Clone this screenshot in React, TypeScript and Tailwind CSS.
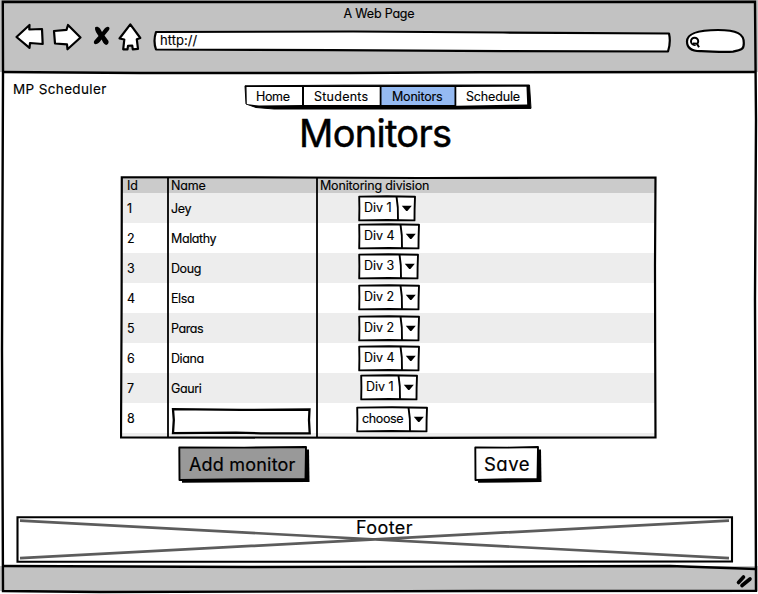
import React from "react";

const rows = [
  { id: "1", name: "Jey", div: "Div 1", w: 58, box: "ml-[40px] mt-[2px] w-[58px]" },
  { id: "2", name: "Malathy", div: "Div 4", w: 62, box: "ml-[40px] mt-0 w-[62px]" },
  { id: "3", name: "Doug", div: "Div 3", w: 61, box: "ml-[40px] mt-0 w-[61px]" },
  { id: "4", name: "Elsa", div: "Div 2", w: 62, box: "ml-[40px] mt-[1px] w-[62px]" },
  { id: "5", name: "Paras", div: "Div 2", w: 62, box: "ml-[40px] mt-[2px] w-[62px]" },
  { id: "6", name: "Diana", div: "Div 4", w: 62, box: "ml-[40px] mt-[2px] w-[62px]" },
  { id: "7", name: "Gauri", div: "Div 1", w: 58, box: "ml-[42px] mt-[1px] w-[58px]" },
  { id: "8", name: "", div: "choose", w: 72, box: "ml-[38px] mt-[3px] w-[72px]" },
];

function Select({ label, w, box }: { label: string; w: number; box: string }) {
  return (
    <div className={`relative h-[27px] ${box}`}>
      <svg className="absolute inset-0" width={w} height="27" fill="none" stroke="#000" strokeWidth="1.9" strokeLinejoin="round">
        <path d={`M1.2 1.6 L${w / 2} 1.3 L${w - 1} 1.7 L${w - 1.4} 14 L${w - 1.5} 25.4 L${w / 2} 25 L1.2 25.4 L1.4 13 Z`} fill="#fff" />
        <path d={`M${w - 19.5} 1.5 Q${w - 17.6} 12 ${w - 18} 25`} />
        <path d={`M${w - 14.2} 10.8 h10 l-4.4 5.2 h-1.2 Z`} fill="#000" stroke="none" />
      </svg>
      <span className={`relative block pl-[6px] pt-[4px] leading-[18px] ${label === "choose" ? "tracking-[-0.35px]" : "tracking-[-0.05px]"}`}>{label}</span>
    </div>
  );
}

function BrowserBar() {
  return (
    <header className="h-[72px] shrink-0 bg-[#c2c2c2]">
      <div className="h-[26px] pt-[5px] text-center text-[12.5px] leading-[17px] tracking-[-0.2px]">A Web Page</div>
      <div className="flex h-[32px] items-start">
        <svg className="ml-[14px] mt-[-5px]" width="130" height="32" viewBox="14 21 130 32" fill="#fff" stroke="#000" strokeWidth="2.2" strokeLinejoin="round">
          <path d="M16.5 37 L29.5 25 L29.3 29.5 L42 29 L42.7 44 L30 43 L29.5 47.8 Z" />
          <path d="M54 31 L66.5 29.8 L68 25 L80.5 37.5 L67.5 49.3 L67 44.3 L55 43.5 Z" />
          <path d="M95 27.5 C96 26 98.5 26.5 100 28.5 L102 32 C103.5 30 105 27.5 107.5 26.8 C109.5 26.8 110 28.5 109 30 L104.5 35.5 L108.5 41 C109 43.5 107.5 45.3 105.5 44.8 C103.5 44 102.5 41 101.5 39.5 C100 42 98 44 95.5 44.2 C93.5 44 93.5 41.8 94.5 40.5 L98.5 36 C97 33.5 94.5 30.5 95 27.5 Z" fill="#000" stroke="none" />
          <path d="M130.3 24.4 L140.3 38 L136.8 39.3 L138 48.8 L132.8 49.3 L132.2 45.5 L128 45.8 L127.5 49.3 L123.2 49.3 L124.3 39.5 L119.5 38.5 Z" />
        </svg>
        <div className="relative ml-[9px] mt-[4px] h-[23px] w-[518px]">
          <svg className="absolute inset-0" width="518" height="23" fill="#fff" stroke="#000" strokeWidth="2.2" strokeLinejoin="round">
            <path d="M3 2 L200 1.5 L350 2.5 L516 3.5 Q518 12 515 21.5 L350 21.2 L180 20.2 L3 19.5 Q0 11 3 2 Z" />
          </svg>
          <span className="relative block pl-[7px] pt-[2px] text-[13px] leading-[17px] tracking-[0.05px]">http://</span>
        </div>
        <svg className="ml-[14px] mt-[1px]" width="62" height="28" viewBox="685 27 62 28" fill="#fff" stroke="#000" strokeWidth="2.2">
          <path d="M687 41.5 C687 34 697 30 718 30 C737 30 744 34 743.8 43 C744 49 742 50 733 51.6 C722 52.7 710 51 700 51.2 C691 51 687 47 687 41.5 Z" />
          <circle cx="694.6" cy="41.3" r="3.6" strokeWidth="2" />
          <path d="M693 43.5 L697 43.8 L699 47.2" strokeWidth="2" />
        </svg>
      </div>
    </header>
  );
}

function Nav() {
  return (
    <nav className="relative mt-[12px] h-[26px] w-[288px]">
      <svg className="absolute inset-0" width="288" height="26" stroke="#000" strokeLinejoin="round">
        <path d="M1 1.8 L100 1.2 L285.5 1 L287 24.4 L212 25 L30 25 L12 23.5 L2 20 Z" />
        <path d="M2.5 3 H58 V21 L15 21.5 L2.8 20 Z M60 3 H135.7 V21 H60 Z M212.3 3 L282.5 2.7 L283.2 20.5 L212.3 21.8 Z" fill="#fff" stroke="none" />
        <path d="M137.5 3 H210.5 V21 H137.5 Z" fill="#95baf2" stroke="none" />
      </svg>
      <div className="relative flex pt-[4px] leading-[17px]">
        <span className="w-[58px] pl-[12px] tracking-[-0.35px]">Home</span>
        <span className="w-[78px] pl-[12px] tracking-[0.25px]">Students</span>
        <span className="w-[74px] pl-[12px] tracking-[-0.2px]">Monitors</span>
        <span className="pl-[12px] tracking-[-0.15px]">Schedule</span>
      </div>
    </nav>
  );
}

function MonitorTable() {
  return (
    <div className="relative ml-[120px] h-[263px] w-[538px] pl-[2px] pr-[3px] pt-[3px]">
      <div className="flex h-[14px] bg-[#cbcbcb] leading-[14px]">
        <span className="w-[49px] pl-[5px]">Id</span>
        <span className="w-[149px] tracking-[-0.2px]">Name</span>
        <span className="tracking-[-0.17px]">Monitoring division</span>
      </div>
      {rows.map((r, i) => (
        <div key={r.id} className={`flex h-[30px] ${i % 2 === 0 ? "bg-[#ededed]" : "bg-white"}`}>
          <span className="w-[49px] pl-[5px] leading-[31px]">{r.id}</span>
          <div className="w-[147px] leading-[31px] tracking-[-0.4px]">
            {r.name || (
              <svg className="mt-[4px]" width="142" height="28" fill="#fff" stroke="#000" strokeWidth="2.3">
                <path d="M2 2.2 L70 2.9 L138.5 2.5 L138 13 L138.7 26.3 L90 26.3 L65 25.7 L2 26.2 L2.8 13 Z" />
              </svg>
            )}
          </div>
          <Select label={r.div} w={r.w} box={r.box} />
        </div>
      ))}
      <div className="h-[5px] bg-[#ededed]" />
      <svg className="pointer-events-none absolute inset-0" width="538" height="263" fill="none" stroke="#000" strokeWidth="2.2">
        <path d="M1.8 1.3 L110 1.3 L300 2 L535.5 1.5 L535 90 L535.2 180 L535.5 261.5 L300 261.8 L1 261.3 L1.6 130 Z" />
        <path d="M48 2 V262 M197 2 V261" strokeWidth="1.8" />
      </svg>
    </div>
  );
}

function Button({ label, w, fill, box, text }: { label: string; w: number; fill: string; box: string; text: string }) {
  return (
    <button className={`relative block h-[37px] text-left ${box}`}>
      <svg className="absolute inset-0" width={w} height="37" strokeLinejoin="round">
        <path d={`M4 4 L${w - 1} 3.5 L${w - 0.5} 36 L4 36.8 Z`} />
        <path d={`M1.3 1.4 L${w / 2} 1.6 L${w - 4} 1 L${w - 4.5} 33 L${w / 2} 33.2 L1.5 34 Z`} fill={fill} stroke="#000" strokeWidth="1.9" />
      </svg>
      <span className={`relative block whitespace-nowrap leading-[35px] [-webkit-text-stroke:0.2px_black] ${text}`}>{label}</span>
    </button>
  );
}

export default function App() {
  return (
    <div className="relative flex h-[594px] w-[758px] flex-col overflow-hidden bg-white font-['Inter',sans-serif] text-[12.5px] text-black [-webkit-text-stroke:0.15px_black] [font-feature-settings:'cv11']">
      <BrowserBar />
      <main className="h-[494px] shrink-0">
        <div className="flex h-[42px]">
          <span className="w-[244px] pl-[13px] pt-[8px] text-[13.5px] leading-[18px] tracking-[0.36px]">MP Scheduler</span>
          <Nav />
        </div>
        <h1 className="h-[62px] pl-[299px] text-[38px] leading-[38px] tracking-[-0.7px] [-webkit-text-stroke:0.5px_black]">Monitors</h1>
        <MonitorTable />
        <div className="flex pt-[7px]">
          <Button label="Add monitor" w={132} fill="#999999" box="ml-[178px] w-[132px]" text="pl-[11px] text-[18px] tracking-[0.2px]" />
          <Button label="Save" w={68} fill="#ffffff" box="ml-[164px] w-[68px]" text="pl-[10px] text-[18.5px] tracking-[0.5px]" />
        </div>
        <footer className="relative ml-[16px] mt-[33px] h-[47px] w-[718px]">
          <svg className="absolute inset-0" width="718" height="47" fill="none" stroke="#000" strokeWidth="2.1">
            <path d="M1.5 1.3 H716 V45.5 L1.5 45.8 Z" />
            <path d="M4 4.6 C150 12 360 23 713 42.2 M4 42.2 C150 35 360 22.5 713 4.6" stroke="#5c5c5c" strokeWidth="2.7" />
          </svg>
          <span className="relative block pl-[340px] text-[18px] leading-[23px] tracking-[0.4px]">Footer</span>
        </footer>
      </main>
      <div className="h-[25px] shrink-0 bg-[#c2c2c2]" />
      <svg className="pointer-events-none absolute inset-0" width="758" height="594" fill="none" stroke="#000" strokeWidth="2.4">
        <path d="M2.8 1.8 L400 2 L755 1.8 L756 120 L755 300 L756 590.8 L480 591 L100 592 L3 591 L2 350 L3 72 Z" />
        <path d="M2 72 L140 73 L350 73 L480 72.2 L755 72" strokeWidth="2.6" />
        <path d="M2 566 L250 567 L450 566.6 L670 566 L756 569" />
        <path d="M738.5 582.5 L743.5 577 M742 585.5 L750 579" strokeWidth="3.6" strokeLinecap="round" />
      </svg>
    </div>
  );
}
